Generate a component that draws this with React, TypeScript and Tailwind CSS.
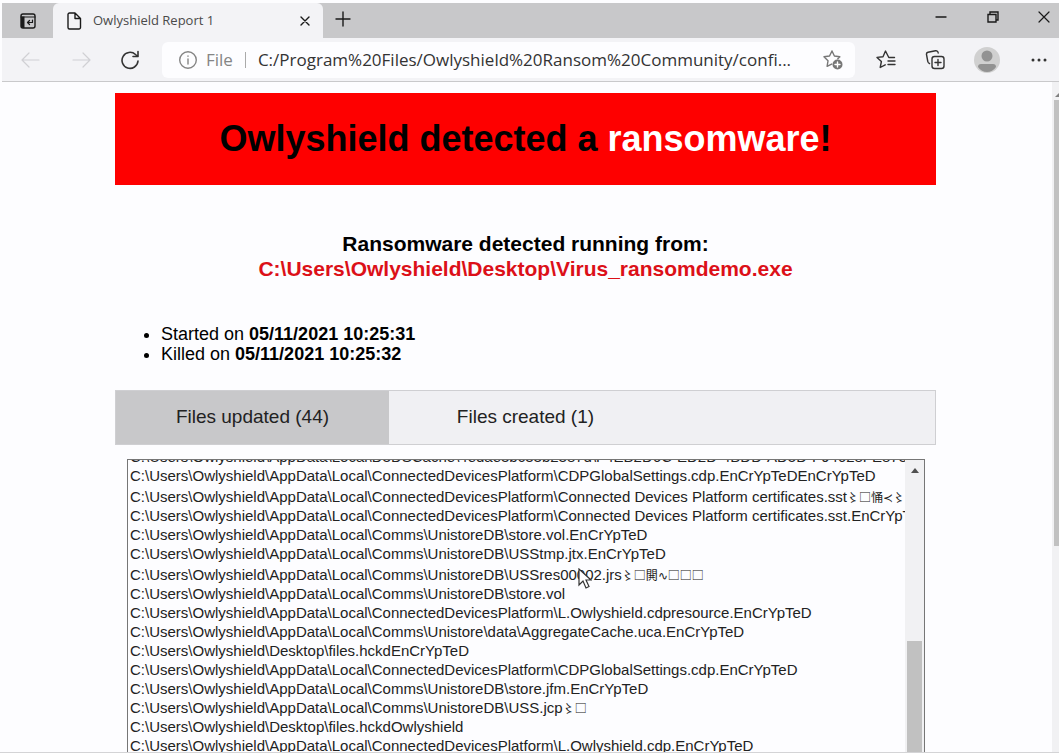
import type { ReactNode } from "react";

interface FileEntry {
  path: string;
  garbled?: string;
}

const files: FileEntry[] = [
  { path: "C:\\Users\\Owlyshield\\AppData\\Local\\D3DSCache\\4edae3bc33b2387d\\F4EB2D6C-ED2D-4BDD-AD5D-F94628FE873" },
  { path: "C:\\Users\\Owlyshield\\AppData\\Local\\ConnectedDevicesPlatform\\CDPGlobalSettings.cdp.EnCrYpTeDEnCrYpTeD" },
  { path: "C:\\Users\\Owlyshield\\AppData\\Local\\ConnectedDevicesPlatform\\Connected Devices Platform certificates.sst", garbled: "〻□悀≺〻" },
  { path: "C:\\Users\\Owlyshield\\AppData\\Local\\ConnectedDevicesPlatform\\Connected Devices Platform certificates.sst.EnCrYpTeD" },
  { path: "C:\\Users\\Owlyshield\\AppData\\Local\\Comms\\UnistoreDB\\store.vol.EnCrYpTeD" },
  { path: "C:\\Users\\Owlyshield\\AppData\\Local\\Comms\\UnistoreDB\\USStmp.jtx.EnCrYpTeD" },
  { path: "C:\\Users\\Owlyshield\\AppData\\Local\\Comms\\UnistoreDB\\USSres00002.jrs", garbled: "〻□閧∿□□□" },
  { path: "C:\\Users\\Owlyshield\\AppData\\Local\\Comms\\UnistoreDB\\store.vol" },
  { path: "C:\\Users\\Owlyshield\\AppData\\Local\\ConnectedDevicesPlatform\\L.Owlyshield.cdpresource.EnCrYpTeD" },
  { path: "C:\\Users\\Owlyshield\\AppData\\Local\\Comms\\Unistore\\data\\AggregateCache.uca.EnCrYpTeD" },
  { path: "C:\\Users\\Owlyshield\\Desktop\\files.hckdEnCrYpTeD" },
  { path: "C:\\Users\\Owlyshield\\AppData\\Local\\ConnectedDevicesPlatform\\CDPGlobalSettings.cdp.EnCrYpTeD" },
  { path: "C:\\Users\\Owlyshield\\AppData\\Local\\Comms\\UnistoreDB\\store.jfm.EnCrYpTeD" },
  { path: "C:\\Users\\Owlyshield\\AppData\\Local\\Comms\\UnistoreDB\\USS.jcp", garbled: "〻□" },
  { path: "C:\\Users\\Owlyshield\\Desktop\\files.hckdOwlyshield" },
  { path: "C:\\Users\\Owlyshield\\AppData\\Local\\ConnectedDevicesPlatform\\L.Owlyshield.cdp.EnCrYpTeD" },
];

function IconButton({ label, className, children }: { label: string; className: string; children: ReactNode }) {
  return (
    <button type="button" aria-label={label} className={`flex shrink-0 items-center justify-center ${className}`}>
      {children}
    </button>
  );
}

function Svg({ size, children }: { size: number; children: ReactNode }) {
  return (
    <svg width={size} height={size} viewBox={`0 0 ${size} ${size}`} fill="none" stroke="currentColor" strokeWidth="1.4" strokeLinecap="round" strokeLinejoin="round">
      {children}
    </svg>
  );
}

function TabStrip() {
  return (
    <div className="flex h-[35px] shrink-0 bg-[#c8c8ca] text-[#1a1a1a]">
      <IconButton label="Tab actions" className="w-[51px]">
        <Svg size={18}>
          <rect x="2" y="2" width="14" height="14" rx="2" />
          <path d="M2 5h14" strokeWidth="1.2" />
          <path d="M2 4.500h3.500V16H4a2 2 0 0 1-2-2z" fill="currentColor" stroke="none" />
          <path d="M13.500 8v2.500H8.500M10.500 8.500l-2 2 2 2" strokeWidth="1.2" />
        </Svg>
      </IconButton>
      <div className="flex w-[270px] items-center rounded-t-md bg-[#f3f3f6] pl-3">
        <Svg size={18}>
          <path d="M4.500 1H10l5.500 5.500v9A1.500 1.500 0 0 1 14 17H4.500A1.500 1.500 0 0 1 3 15.500v-13A1.500 1.500 0 0 1 4.500 1zM10 1v5.500h5.500" />
        </Svg>
        <span className="ml-2.5 flex-1 text-[13px] text-[#4a4a4a]">Owlyshield Report 1</span>
        <IconButton label="Close tab" className="mr-2 size-5">
          <Svg size={12}><path d="M2 2l8 8M10 2l-8 8" /></Svg>
        </IconButton>
      </div>
      <IconButton label="New tab" className="w-10 pb-1">
        <Svg size={18}><path d="M9 2v14M2 9h14" /></Svg>
      </IconButton>
      <div className="flex-1" />
      <IconButton label="Minimize" className="w-8 pb-2">
        <Svg size={12}><path d="M1 6h10" /></Svg>
      </IconButton>
      <IconButton label="Restore" className="w-[72px] pb-2">
        <Svg size={12}><path d="M1 3.500h8V11H1zM3 3.500V1h8v8H9" strokeLinejoin="miter" /></Svg>
      </IconButton>
      <IconButton label="Close" className="w-[30px] pb-2">
        <Svg size={12}><path d="M1 1l10 10M11 1L1 11" strokeWidth="1.2" /></Svg>
      </IconButton>
    </div>
  );
}

function Toolbar() {
  return (
    <div className="flex h-[44px] shrink-0 items-center border-b border-[#c9c9cb] bg-[#f3f3f6] text-[#333]">
      <IconButton label="Back" className="w-[58px] text-[#d0d0d4]">
        <Svg size={20}><path d="M18 10H1M8 3l-7 7 7 7" strokeWidth="1.2" /></Svg>
      </IconButton>
      <IconButton label="Forward" className="w-[42px] text-[#d0d0d4]">
        <Svg size={20}><path d="M2 10h17M12 3l7 7-7 7" strokeWidth="1.2" /></Svg>
      </IconButton>
      <IconButton label="Refresh" className="w-[56px]">
        <Svg size={20}><path d="M18 11a8 8 0 1 1-2.500-6.500L18 6.500M18 1.500v5h-5" strokeWidth="1.6" /></Svg>
      </IconButton>
      <div className="ml-1 flex h-[36px] min-w-0 flex-1 items-center rounded-md bg-[#fdfdff]">
        <span className="ml-4 text-[#858585]">
          <Svg size={20}><circle cx="10" cy="10" r="8.300" /><path d="M10 9v5M10 6v.3" /></Svg>
        </span>
        <span className="ml-2 text-[17px] text-[#858585]">File</span>
        <span className="mr-3 ml-3 h-4 w-px bg-[#aaa]" />
        <input
          aria-label="Address"
          readOnly
          defaultValue="C:/Program%20Files/Owlyshield%20Ransom%20Community/confi..."
          className="min-w-0 flex-1 bg-transparent text-[17px] text-[#333] outline-none"
        />
        <IconButton label="Add to favorites" className="mr-1.5 w-8 text-[#777]">
          <Svg size={22}>
            <path d="M10 2l2.400 5 5.400.8M10 2L7.500 7 2 7.800l4 4-.9 5.600 4.500-2.300M17.800 7.800l-2 2" />
            <circle cx="15.500" cy="15.500" r="5" fill="currentColor" stroke="none" />
            <path d="M15.500 13v5M13 15.500h5" stroke="#fff" />
          </Svg>
        </IconButton>
      </div>
      <IconButton label="Favorites" className="ml-0.5 w-[58px]">
        <Svg size={20}><path d="M18.500 7.500h-5.700L9.500 1 7 6.700 1 7.400l4.400 4.100-1.200 6 5-2.700M12 11h7M12 14.500h7" /></Svg>
      </IconButton>
      <IconButton label="Collections" className="w-10">
        <Svg size={20}>
          <rect x="7" y="6.500" width="12" height="12" rx="2.500" />
          <path d="M13 9.500v6M10 12.500h6M4.500 13.500q-1.500-.5-1.700-2L1.500 4.500A2 2 0 0 1 3 2.200l7.500-1.400a2.300 2.300 0 0 1 2.700 2.200" />
        </Svg>
      </IconButton>
      <IconButton label="Profile" className="w-16">
        <svg width="26" height="26" viewBox="0 0 26 26">
          <circle cx="13" cy="13" r="13" fill="#d0d0d0" />
          <circle cx="13" cy="9" r="5.500" fill="#929292" />
          <path d="M4 20q0-3 3-3h12q3 0 3 3-3.500 5-9 5t-9-5" fill="#929292" />
        </svg>
      </IconButton>
      <IconButton label="More" className="w-10">
        <svg width="18" height="6" viewBox="0 0 18 6" fill="#333"><circle cx="3" cy="3" r="1.500" /><circle cx="9" cy="3" r="1.500" /><circle cx="15" cy="3" r="1.500" /></svg>
      </IconButton>
    </div>
  );
}

function FileList() {
  return (
    <div className="relative mr-[11px] ml-3 mt-[14px] flex min-h-0 flex-1 overflow-hidden border border-b-0 border-[#767676]">
      <ul className="-mt-[13px] min-w-0 flex-1 overflow-hidden pl-0.5 text-[15px] leading-[19px] whitespace-nowrap text-[#222]">
        {files.map(f => (
          <li key={f.path} className={f.garbled && f.garbled.length > 2 ? "h-[21px] pt-0.5" : "h-[19px]"}>
            {f.path}
            {f.garbled && <span className="font-['Noto_Sans_CJK_JP',sans-serif] text-xs leading-none">{f.garbled}</span>}
          </li>
        ))}
      </ul>
      <div className="flex w-[19px] shrink-0 flex-col items-center bg-[#f1f1f3] pt-2">
        <svg width="8" height="5" viewBox="0 0 8 5" fill="#505050"><path d="M4 0l4 5H0z" /></svg>
        <div className="mt-[168px] w-[15px] flex-1 bg-[#c1c1c1]" />
      </div>
      <svg className="absolute top-[108px] left-[449px]" width="15" height="22" viewBox="0 0 15 22" fill="#fff" stroke="#333" strokeWidth="1.2">
        <path d="M2 1v16l4-4 3 7 3-1.500-3-6.500h5z" />
      </svg>
    </div>
  );
}

export default function App() {
  return (
    <div className="flex h-screen flex-col overflow-hidden border-b border-[#d4d4d6] bg-[#fdfdff] pt-[3px] pl-0.5 font-['Open_Sans','Noto_Sans',sans-serif]">
      <TabStrip />
      <Toolbar />
      <div className="flex min-h-0 flex-1 font-['Liberation_Sans','Noto_Sans_CJK_JP',sans-serif] text-black">
        <main className="mr-[116px] ml-[113px] flex min-w-0 flex-1 flex-col pt-[11px]">
          <h1 className="flex h-[92px] shrink-0 items-center justify-center bg-[#fe0000] text-4xl font-bold">
            <span>Owlyshield detected a <span className="text-white">ransomware</span>!</span>
          </h1>
          <h2 className="mt-[46px] text-center text-[21px] leading-[25px] font-bold">
            Ransomware detected running from:
            <br />
            <span className="text-[#dc1018]">C:\Users\Owlyshield\Desktop\Virus_ransomdemo.exe</span>
          </h2>
          <ul className="mt-[43px] list-disc pl-[46px] text-lg leading-5">
            <li>Started on <b>05/11/2021 10:25:31</b></li>
            <li>Killed on <b>05/11/2021 10:25:32</b></li>
          </ul>
          <div className="mt-[26px] flex h-[55px] shrink-0 border border-[#cfcfd2] bg-[#f0f0f3] text-[19px] text-[#222]">
            <button type="button" className="w-1/3 bg-[#c8c8ca]">Files updated (44)</button>
            <button type="button" className="w-1/3">Files created (1)</button>
          </div>
          <FileList />
        </main>
        <div className="flex w-[7px] shrink-0 flex-col bg-[#f1f1f3] pt-[11px]">
          <svg className="ml-0.5" width="5" height="4" viewBox="0 0 5 4" fill="#808080"><path d="M5 0v4H1z" /></svg>
          <div className="mt-[3px] ml-0.5 h-[446px] bg-[#c1c1c1]" />
        </div>
      </div>
    </div>
  );
}
